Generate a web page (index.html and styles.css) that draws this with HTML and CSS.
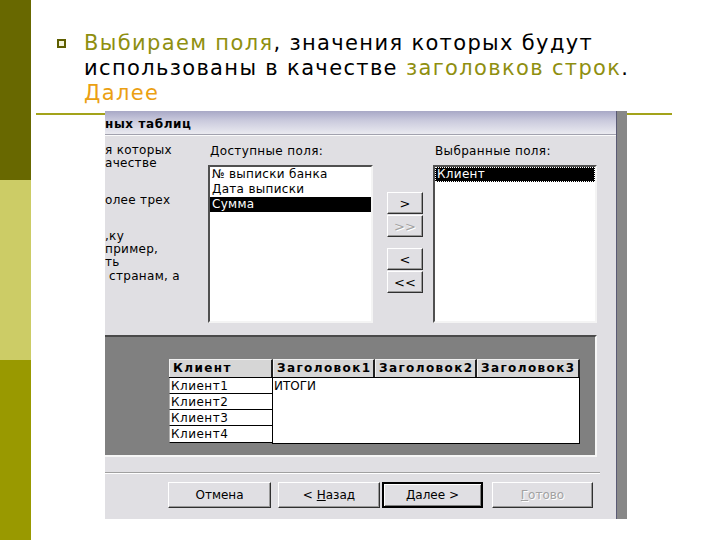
FILE: index.html
```html
<!DOCTYPE html>
<html lang="ru">
<head>
<meta charset="utf-8">
<title>Сводная таблица</title>
<link rel="stylesheet" href="styles.css">
</head>
<body>
<div class="page">
  <div class="sidebar">
    <div class="sb sb1"></div>
    <div class="sb sb2"></div>
    <div class="sb sb3"></div>
  </div>
  <div class="main">
    <div class="point">
      <div class="bullet"></div>
      <div class="point-text"><span class="olive">Выбираем поля</span>, значения которых будут<br>использованы в качестве <span class="olive">заголовков строк</span>.<br><span class="orange">Далее</span></div>
    </div>
    <div class="stage">
      <div class="dialog">
        <div class="dlg-main">
          <div class="title">ных таблиц</div>
          <div class="upper">
            <div class="desc">
              <p>я которых<br>ачестве</p>
              <p>олее трех</p>
              <p>,ку<br>пример,<br>ть<br>&nbsp;странам, а</p>
            </div>
            <div class="col col-avail">
              <div class="label">Доступные поля:</div>
              <div class="list">
                <div class="item">№ выписки банка</div>
                <div class="item">Дата выписки</div>
                <div class="item sel">Сумма</div>
              </div>
            </div>
            <div class="movers">
              <div class="btn small">&gt;</div>
              <div class="btn small dis">&gt;&gt;</div>
              <div class="btn small pair2">&lt;</div>
              <div class="btn small">&lt;&lt;</div>
            </div>
            <div class="col col-sel">
              <div class="label">Выбранные поля:</div>
              <div class="list">
                <div class="item sel focus">Клиент</div>
              </div>
            </div>
          </div>
          <div class="pivot-wrap">
            <div class="pivot">
              <div class="ptable">
                <div class="phead">
                  <div class="hcell c1">Клиент</div>
                  <div class="hcell c2">Заголовок1</div>
                  <div class="hcell c3">Заголовок2</div>
                  <div class="hcell c4">Заголовок3</div>
                </div>
                <div class="pbody">
                  <div class="rowcol">
                    <div class="rcell">Клиент1</div>
                    <div class="rcell">Клиент2</div>
                    <div class="rcell">Клиент3</div>
                    <div class="rcell">Клиент4</div>
                  </div>
                  <div class="values">ИТОГИ</div>
                </div>
              </div>
            </div>
          </div>
          <div class="lower">
            <div class="sep"></div>
            <div class="btnrow">
              <div class="btn wide b1">Отмена</div>
              <div class="btn wide b2">&lt;&nbsp;<u>Н</u>азад</div>
              <div class="btn wide b3 default"><u>Д</u>алее&nbsp;&gt;</div>
              <div class="btn wide b4 dis"><u>Г</u>отово</div>
            </div>
          </div>
        </div>
        <div class="dlg-edge"></div>
      </div>
    </div>
  </div>
</div>
</body>
</html>
```

FILE: styles.css
```css
html, body {
  margin: 0;
  padding: 0;
  background: #ffffff;
}
.page {
  display: flex;
  width: 720px;
  height: 540px;
  overflow: hidden;
  background: #ffffff;
}
.sidebar {
  width: 31px;
  display: flex;
  flex-direction: column;
  flex-shrink: 0;
}
.sb1 { height: 180px; background: #686800; }
.sb2 { height: 180px; background: #cccc66; }
.sb3 { flex: 1; background: #999900; }

.main {
  flex: 1;
  display: flex;
  flex-direction: column;
}
.point {
  display: flex;
  padding-top: 31px;
  padding-left: 26px;
  height: 76px;
}
.bullet {
  width: 5px;
  height: 5px;
  margin-top: 8px;
  border: 2px solid #5e5e00;
  background: #f4f4dc;
  flex-shrink: 0;
}
.point-text {
  margin-left: 18px;
  font-family: "DejaVu Sans", Verdana, sans-serif;
  font-size: 21px;
  line-height: 25px;
  letter-spacing: 1.35px;
  color: #000;
  white-space: nowrap;
}
.olive { color: #8f8f10; }
.orange { color: #eba012; }

.stage {
  margin-top: 6px;
  margin-left: 5px;
  width: 636px;
  border-top: 2px solid #a3a31a;
}
.dialog {
  margin-top: -4px;
  margin-left: 69px;
  width: 522px;
  height: 408px;
  display: flex;
  font-family: "DejaVu Sans", Tahoma, sans-serif;
  font-size: 12px;
  color: #000;
}
.dlg-main {
  width: 511px;
  display: flex;
  flex-direction: column;
  background: #e0dfe3;
}
.dlg-edge {
  width: 10px;
  border-left: 1px solid #5a5a74;
  background: #888888;
}
.title {
  height: 20px;
  padding-top: 3px;
  line-height: 20px;
  font-weight: bold;
  letter-spacing: 0.6px;
  border-bottom: 1px solid #a2a2ae;
  background: linear-gradient(to bottom, #a8a8c6 0%, #c9c9dc 40%, #eaeaf0 100%);
  white-space: nowrap;
}
.upper {
  height: 191px;
  padding-top: 8px;
  border-top: 1px solid #fbfbfb;
  display: flex;
}
.desc {
  width: 103px;
  line-height: 13.3px;
  white-space: nowrap;
  letter-spacing: 0.3px;
}
.desc p { margin: 0 0 23px 0; }
.col { display: flex; flex-direction: column; }
.col-avail { width: 165px; }
.col-sel { width: 164px; margin-left: 10px; }
.label {
  height: 14px;
  line-height: 14px;
  margin-bottom: 7px;
  padding-left: 2px;
  letter-spacing: 0.35px;
  white-space: nowrap;
}
.list {
  height: 154px;
  background: #fff;
  border: 2px solid;
  border-color: #505050 #f4f4f4 #f4f4f4 #505050;
}
.item {
  height: 15px;
  line-height: 15px;
  padding-left: 2px;
  letter-spacing: 0.3px;
  white-space: nowrap;
}
.item.sel {
  background: #000;
  color: #fff;
}
.item.focus {
  outline: 1px dotted #ffffff;
  outline-offset: -1px;
}
.movers {
  width: 36px;
  margin-left: 14px;
  padding-top: 48px;
  display: flex;
  flex-direction: column;
  gap: 1px;
}
.btn {
  box-sizing: border-box;
  display: flex;
  align-items: center;
  justify-content: center;
  background: #e0dfe3;
  border: 1px solid;
  border-color: #ffffff #303030 #303030 #ffffff;
  box-shadow: inset -1px -1px 0 #9a9a9a;
  white-space: nowrap;
}
.btn.small { height: 22px; font-size: 13px; }
.btn.pair2 { margin-top: 10px; }
.btn.dis {
  color: #a2a2a2;
  text-shadow: 1px 1px 0 #ffffff;
}
.btn u { text-decoration: underline; }

.pivot-wrap {
  display: flex;
}
.pivot {
  width: 426px;
  height: 96px;
  background: #808080;
  border-top: 2px solid #4a4a4a;
  border-right: 2px solid #f6f6f6;
  border-bottom: 2px solid #f6f6f6;
  padding-top: 22px;
  padding-left: 64px;
}
.ptable {
  width: 411px;
  display: flex;
  flex-direction: column;
}
.phead {
  display: flex;
  height: 18px;
}
.hcell {
  box-sizing: border-box;
  height: 18px;
  line-height: 16px;
  padding-left: 3px;
  font-weight: bold;
  letter-spacing: 1.4px;
  background: #d6d6d6;
  border-top: 1px solid #f0f0f0;
  border-left: 1px solid #f0f0f0;
  border-right: 2px solid #202020;
  white-space: nowrap;
  overflow: hidden;
}
.hcell.c1 { width: 104px; }
.hcell.c2 { width: 102px; }
.hcell.c3 { width: 102px; }
.hcell.c4 { width: 103px; }
.pbody {
  display: flex;
  height: 66px;
  border-top: 1px solid #000;
}
.rowcol {
  width: 103px;
  border-right: 1px solid #000;
  display: flex;
  flex-direction: column;
}
.rcell {
  box-sizing: border-box;
  height: 16px;
  line-height: 16px;
  background: #fff;
  border-bottom: 1px solid #000;
  border-left: 1px solid #b0b0b0;
  padding-left: 1px;
  letter-spacing: 0.5px;
  white-space: nowrap;
}
.rcell:last-child { height: 17px; }
.values {
  flex: 1;
  background: #fff;
  border-right: 1px solid #000;
  border-bottom: 1px solid #000;
  padding-left: 1px;
  line-height: 16px;
}

.lower {
  flex: 1;
  padding-top: 15px;
  display: flex;
  flex-direction: column;
}
.sep {
  width: 495px;
  border-top: 1px solid #a0a0a0;
  border-bottom: 1px solid #ffffff;
}
.btnrow {
  display: flex;
  padding-top: 8px;
  padding-left: 63px;
}
.btn.wide { height: 26px; font-size: 12px; }
.b1 { width: 103px; }
.b2 { width: 102px; margin-left: 7px; }
.b3 { width: 101px; margin-left: 2px; }
.b4 { width: 101px; margin-left: 9px; }
.btn.default {
  border: 2px solid #000;
  box-shadow: inset 1px 1px 0 #ffffff, inset -1px -1px 0 #808080;
}
```
